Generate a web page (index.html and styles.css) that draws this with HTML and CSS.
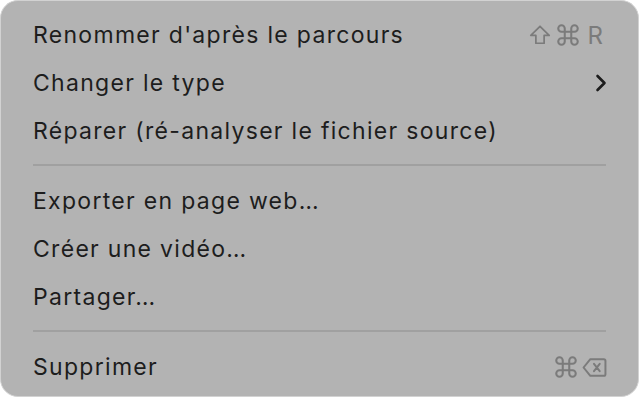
FILE: index.html
```html
<!DOCTYPE html>
<html lang="fr">
<head>
<meta charset="utf-8">
<title>Menu</title>
<link rel="stylesheet" href="styles.css">
</head>
<body>
<div class="menu">
  <div class="item">
    <span class="label">Renommer d'après le parcours</span>
    <span class="keys">
      <svg class="key key-shift" viewBox="0 0 24 24"><path d="M12 2.5 L2 12.5 H7.5 V21 H16.5 V12.5 H22 Z"/></svg>
      <svg class="key key-cmd" viewBox="0 0 24 24"><path d="M18 3a3 3 0 0 0-3 3v12a3 3 0 0 0 3 3 3 3 0 0 0 3-3 3 3 0 0 0-3-3H6a3 3 0 0 0-3 3 3 3 0 0 0 3 3 3 3 0 0 0 3-3V6a3 3 0 0 0-3-3 3 3 0 0 0-3 3 3 3 0 0 0 3 3h12a3 3 0 0 0 3-3 3 3 0 0 0-3-3z"/></svg>
      <span class="key-letter">R</span>
    </span>
  </div>
  <div class="item">
    <span class="label">Changer le type</span>
    <svg class="chevron" viewBox="0 0 12 18"><path d="M2.5 2 L9.5 9 L2.5 16"/></svg>
  </div>
  <div class="item">
    <span class="label">Réparer (ré-analyser le fichier source)</span>
  </div>
  <div class="separator"></div>
  <div class="item">
    <span class="label">Exporter en page web…</span>
  </div>
  <div class="item">
    <span class="label">Créer une vidéo…</span>
  </div>
  <div class="item">
    <span class="label">Partager…</span>
  </div>
  <div class="separator"></div>
  <div class="item">
    <span class="label">Supprimer</span>
    <span class="keys keys-end">
      <svg class="key key-cmd" viewBox="0 0 24 24"><path d="M18 3a3 3 0 0 0-3 3v12a3 3 0 0 0 3 3 3 3 0 0 0 3-3 3 3 0 0 0-3-3H6a3 3 0 0 0-3 3 3 3 0 0 0 3 3 3 3 0 0 0 3-3V6a3 3 0 0 0-3-3 3 3 0 0 0-3 3 3 3 0 0 0 3 3h12a3 3 0 0 0 3-3 3 3 0 0 0-3-3z"/></svg>
      <svg class="key key-del" viewBox="0 0 24 20"><path d="M8 2 H21 a1.5 1.5 0 0 1 1.5 1.5 V16.5 a1.5 1.5 0 0 1-1.5 1.5 H8 L1.5 10 Z M11.5 6.5 L17 13.5 M17 6.5 L11.5 13.5"/></svg>
    </span>
  </div>
</div>
</body>
</html>
```

FILE: styles.css
```css
html, body {
  margin: 0;
  padding: 0;
  background: #ffffff;
}

body {
  width: 642px;
  height: 400px;
  font-family: Inter, "Noto Sans", "Liberation Sans", sans-serif;
}

.menu {
  box-sizing: border-box;
  width: 639px;
  height: 397px;
  background: #b3b3b3;
  border: 1px solid #d2d2d2;
  border-radius: 18px;
  padding: 10px 35px 0 32px;
  display: flex;
  flex-direction: column;
}

.item {
  height: 48px;
  display: flex;
  align-items: center;
  justify-content: space-between;
  color: #1d1d1d;
  font-size: 23px;
  letter-spacing: 1.3px;
}

.label {
  white-space: nowrap;
}

.keys {
  display: flex;
  align-items: center;
  gap: 4px;
  color: #7b7b7b;
}

.keys-end {
  margin-right: -4px;
  gap: 3px;
}

.key {
  fill: none;
  stroke: #7b7b7b;
  stroke-width: 1.9;
  stroke-linejoin: round;
  stroke-linecap: round;
}

.key-shift {
  width: 22px;
  height: 22px;
}

.key-cmd {
  width: 26px;
  height: 26px;
}

.key-del {
  width: 25px;
  height: 21px;
}

.key-letter {
  font-size: 24px;
  letter-spacing: 0;
  color: #7b7b7b;
  margin-left: 3px;
}

.chevron {
  width: 12px;
  height: 18px;
  margin-right: -4px;
  fill: none;
  stroke: #1d1d1d;
  stroke-width: 2.6;
  stroke-linecap: round;
  stroke-linejoin: round;
}

.separator {
  height: 2px;
  background: #a0a0a0;
  margin: 9px -3px 11px 0;
}
```
